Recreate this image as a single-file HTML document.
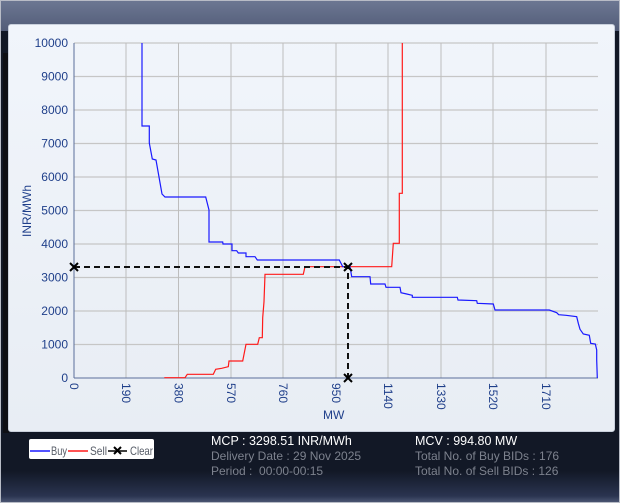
<!DOCTYPE html>
<html><head><meta charset="utf-8"><style>
html,body{margin:0;padding:0;width:620px;height:503px;overflow:hidden;background:#fff;font-family:"Liberation Sans",sans-serif}
.win{position:absolute;left:0;top:0;width:618px;height:501px;border:1px solid #b8bcc6;background:linear-gradient(#121826 0,#121826 470px,#2a3450 495px,#4a5572 501px)}
.hdr{position:absolute;left:0;top:0;width:618px;height:30px;background:linear-gradient(#6c7792,#525c78)}
.strip{position:absolute;left:2px;top:52px;width:6px;height:380px;background:#0e0f14}
.panel{position:absolute;left:8px;top:24px;width:607px;height:408px;background:linear-gradient(#f1f5fb,#e8edf4);border-radius:3px;border:1px solid #c9d0dc;box-sizing:border-box}
.info{position:absolute;font-size:12px;line-height:15px;color:#7d828e;white-space:nowrap}
.info b{font-weight:normal;color:#fff;font-size:12.5px}
</style></head><body>
<div class="win"><div class="hdr"></div><div class="strip"></div></div>
<div class="panel"></div>
<svg width="620" height="503" style="position:absolute;left:0;top:0" font-family="Liberation Sans, sans-serif">
<g stroke="#c6c6c6" stroke-width="1.2">
<line x1="74" y1="43" x2="598" y2="43"/><line x1="74" y1="76.5" x2="598" y2="76.5"/><line x1="74" y1="110" x2="598" y2="110"/><line x1="74" y1="143.5" x2="598" y2="143.5"/><line x1="74" y1="177" x2="598" y2="177"/><line x1="74" y1="210.5" x2="598" y2="210.5"/><line x1="74" y1="244" x2="598" y2="244"/><line x1="74" y1="277.5" x2="598" y2="277.5"/><line x1="74" y1="311" x2="598" y2="311"/><line x1="74" y1="344.5" x2="598" y2="344.5"/>
</g>
<g stroke="#bdbdbd" stroke-width="1">
<line x1="126" y1="43" x2="126" y2="378"/><line x1="178.5" y1="43" x2="178.5" y2="378"/><line x1="231" y1="43" x2="231" y2="378"/><line x1="283" y1="43" x2="283" y2="378"/><line x1="336" y1="43" x2="336" y2="378"/><line x1="388" y1="43" x2="388" y2="378"/><line x1="441" y1="43" x2="441" y2="378"/><line x1="493" y1="43" x2="493" y2="378"/><line x1="546" y1="43" x2="546" y2="378"/>
</g>
<g stroke="#5a6e9a" stroke-width="1">
<line x1="74" y1="43" x2="74" y2="378"/><line x1="74" y1="378" x2="598" y2="378"/>
</g>
<g fill="#1f3f8a" font-size="12" text-anchor="end">
<text x="68" y="47">10000</text><text x="68" y="80.5">9000</text><text x="68" y="114">8000</text><text x="68" y="147.5">7000</text><text x="68" y="181">6000</text><text x="68" y="214.5">5000</text><text x="68" y="248">4000</text><text x="68" y="281.5">3000</text><text x="68" y="315">2000</text><text x="68" y="348.5">1000</text><text x="68" y="382">0</text>
</g>
<g fill="#1f3f8a" font-size="12">
<text transform="translate(70,383) rotate(90)">0</text>
<text transform="translate(122,383) rotate(90)">190</text>
<text transform="translate(174.5,383) rotate(90)">380</text>
<text transform="translate(227,383) rotate(90)">570</text>
<text transform="translate(279,383) rotate(90)">760</text>
<text transform="translate(332,383) rotate(90)">950</text>
<text transform="translate(384,383) rotate(90)">1140</text>
<text transform="translate(437,383) rotate(90)">1330</text>
<text transform="translate(489,383) rotate(90)">1520</text>
<text transform="translate(542,383) rotate(90)">1710</text>
<text x="323" y="419">MW</text>
<text transform="translate(31,237) rotate(-90)">INR/MWh</text>
</g>
<polyline fill="none" stroke="#ff1a1a" stroke-width="1.2" points="164.3,377.7 185,377.7 187.3,374.3 213.3,374.3 215.7,369.3 221.7,368.3 228.3,366.7 229,361 242.7,361 246,344.3 257.7,344.3 259.3,337.7 262.3,337.7 262.7,317.7 264,301.7 265,274.3 303.3,274.3 305,266.7 391.7,266.7 393.3,243.3 399.3,243.3 399.3,193.3 402.3,193.3 402.3,43"/>
<polyline fill="none" stroke="#1a1aff" stroke-width="1.2" points="142,43 142,126 149.3,126 149.3,143 152.3,159 156,160 162,194 165,197 205.7,197 209,210 209,242 222.7,242 223,244 232,244 232,250.7 236.7,250.7 238.3,253 246,253 246,256.7 255,256.7 257.3,260 339.3,260 342.7,266.7 350,266.7 351.7,276.7 370,276.7 370.7,284 385,284 386,287.3 400,287.3 401,292.7 406.7,294 412.3,295.3 412.3,297.3 457.3,297.3 458,300 476.7,300.7 477.3,303.3 493.3,304 495,310 549.3,310 556.7,312.7 558.7,314.7 566,315.3 576.7,316.7 578.3,323.3 580,329.3 583.3,334 589.3,335.3 590.7,343.3 595.3,344 596.7,350 596.7,360 597.3,378"/>
<polyline fill="none" stroke="#111" stroke-width="2" stroke-dasharray="6,4" points="74,267 348,267 348,378"/>
<g stroke="#000" stroke-width="2">
<path d="M70,263 l8,8 M78,263 l-8,8"/><path d="M344,263 l8,8 M352,263 l-8,8"/><path d="M344,374 l8,8 M352,374 l-8,8"/>
</g>
<rect x="29" y="439" width="125" height="20" rx="2" fill="#fff"/>
<line x1="30" y1="451" x2="50" y2="451" stroke="#1a1aff" stroke-width="1.5"/>
<line x1="68" y1="451" x2="88" y2="451" stroke="#ff1a1a" stroke-width="1.5"/>
<line x1="108" y1="451" x2="127" y2="451" stroke="#000" stroke-width="1.5"/>
<path d="M114,447 l7,7 M121,447 l-7,7" stroke="#000" stroke-width="2"/>
<g font-size="12" fill="#555b66"><text x="51" y="455" textLength="16" lengthAdjust="spacingAndGlyphs">Buy</text><text x="90" y="455" textLength="17" lengthAdjust="spacingAndGlyphs">Sell</text><text x="130" y="455" textLength="23" lengthAdjust="spacingAndGlyphs">Clear</text></g>
</svg>
<div class="info" style="left:211px;top:434px"><b>MCP : 3298.51 INR/MWh</b><br>Delivery Date : 29 Nov 2025<br>Period :&nbsp; 00:00-00:15</div>
<div class="info" style="left:415px;top:434px"><b>MCV : 994.80 MW</b><br>Total No. of Buy BIDs : 176<br>Total No. of Sell BIDs : 126</div>
</body></html>
